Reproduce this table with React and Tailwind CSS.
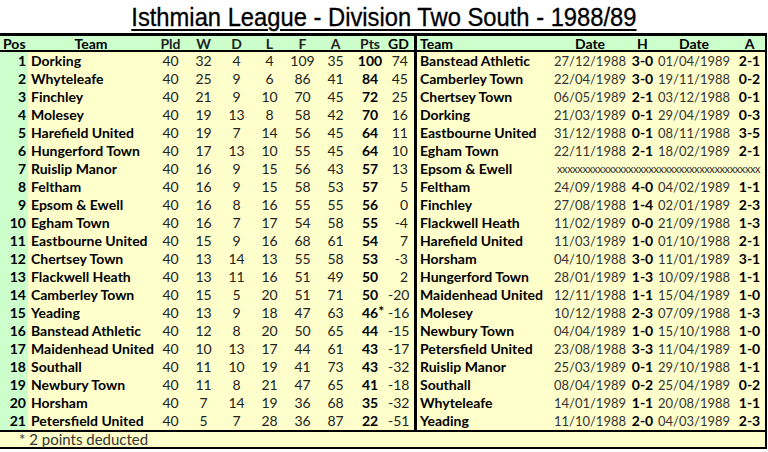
const table = [
  [1, "Dorking", 40, 32, 4, 4, 109, 35, "100", 74],
  [2, "Whyteleafe", 40, 25, 9, 6, 86, 41, "84", 45],
  [3, "Finchley", 40, 21, 9, 10, 70, 45, "72", 25],
  [4, "Molesey", 40, 19, 13, 8, 58, 42, "70", 16],
  [5, "Harefield United", 40, 19, 7, 14, 56, 45, "64", 11],
  [6, "Hungerford Town", 40, 17, 13, 10, 55, 45, "64", 10],
  [7, "Ruislip Manor", 40, 16, 9, 15, 56, 43, "57", 13],
  [8, "Feltham", 40, 16, 9, 15, 58, 53, "57", 5],
  [9, "Epsom & Ewell", 40, 16, 8, 16, 55, 55, "56", 0],
  [10, "Egham Town", 40, 16, 7, 17, 54, 58, "55", -4],
  [11, "Eastbourne United", 40, 15, 9, 16, 68, 61, "54", 7],
  [12, "Chertsey Town", 40, 13, 14, 13, 55, 58, "53", -3],
  [13, "Flackwell Heath", 40, 13, 11, 16, 51, 49, "50", 2],
  [14, "Camberley Town", 40, 15, 5, 20, 51, 71, "50", -20],
  [15, "Yeading", 40, 13, 9, 18, 47, 63, "46*", -16],
  [16, "Banstead Athletic", 40, 12, 8, 20, 50, 65, "44", -15],
  [17, "Maidenhead United", 40, 10, 13, 17, 44, 61, "43", -17],
  [18, "Southall", 40, 11, 10, 19, 41, 73, "43", -32],
  [19, "Newbury Town", 40, 11, 8, 21, 47, 65, "41", -18],
  [20, "Horsham", 40, 7, 14, 19, 36, 68, "35", -32],
  [21, "Petersfield United", 40, 5, 7, 28, 36, 87, "22", -51],
];

const results = [
  ["Banstead Athletic", "27/12/1988", "3-0", "01/04/1989", "2-1"],
  ["Camberley Town", "22/04/1989", "3-0", "19/11/1988", "0-2"],
  ["Chertsey Town", "06/05/1989", "2-1", "03/12/1988", "0-1"],
  ["Dorking", "21/03/1989", "0-1", "29/04/1989", "0-3"],
  ["Eastbourne United", "31/12/1988", "0-1", "08/11/1988", "3-5"],
  ["Egham Town", "22/11/1988", "2-1", "18/02/1989", "2-1"],
  ["Epsom & Ewell"],
  ["Feltham", "24/09/1988", "4-0", "04/02/1989", "1-1"],
  ["Finchley", "27/08/1988", "1-4", "02/01/1989", "2-3"],
  ["Flackwell Heath", "11/02/1989", "0-0", "21/09/1988", "1-3"],
  ["Harefield United", "11/03/1989", "1-0", "01/10/1988", "2-1"],
  ["Horsham", "04/10/1988", "3-0", "11/01/1989", "3-1"],
  ["Hungerford Town", "28/01/1989", "1-3", "10/09/1988", "1-1"],
  ["Maidenhead United", "12/11/1988", "1-1", "15/04/1989", "1-0"],
  ["Molesey", "10/12/1988", "2-3", "07/09/1988", "1-3"],
  ["Newbury Town", "04/04/1989", "1-0", "15/10/1988", "1-0"],
  ["Petersfield United", "23/08/1988", "3-3", "11/04/1989", "1-0"],
  ["Ruislip Manor", "25/03/1989", "0-1", "29/10/1988", "1-1"],
  ["Southall", "08/04/1989", "0-2", "25/04/1989", "0-2"],
  ["Whyteleafe", "14/01/1989", "1-1", "20/08/1988", "1-1"],
  ["Yeading", "11/10/1988", "2-0", "04/03/1989", "2-3"],
];

const font = { fontFamily: "Lato, 'Open Sans', sans-serif" };

const Num = ({ children, w = "w-[33px]" }) => (
  <div className={`${w} shrink-0 text-center text-[#222]`}>{children}</div>
);

export default function App() {
  return (
    <div className="w-[768px] h-[452px] bg-white overflow-hidden" style={font}>
      {/* Title */}
      <div className="h-[33px] flex justify-center items-start">
        <h1
          className="text-[25px] leading-[30px] mt-[2px] text-black underline underline-offset-[3px] decoration-2 whitespace-nowrap scale-x-[0.95] [-webkit-text-stroke:0.3px_black]"
          style={{ fontFamily: "'Liberation Sans', Arial, sans-serif" }}
        >
          Isthmian League - Division Two South - 1988/89
        </h1>
      </div>

      <div className="w-[767px] border-t-[3px] border-r-2 border-b-2 border-black text-[14px]">
        {/* Header */}
        <div className="flex h-[16px] leading-[16px] bg-[#ccffcc] font-bold text-black border-b-2 border-black">
          <div className="w-[414px] shrink-0 flex">
            <div className="w-[28px] shrink-0 pl-[3px]">Pos</div>
            <div className="w-[126px] shrink-0 text-center">Team</div>
            <Num>Pld</Num>
            <Num>W</Num>
            <Num>D</Num>
            <Num>L</Num>
            <Num>F</Num>
            <Num>A</Num>
            <Num w="w-[36px]">Pts</Num>
            <div className="w-[26px] shrink-0 text-right pr-[6px]">GD</div>
          </div>
          <div className="flex-1 flex border-l-[3px] border-black">
            <div className="w-[136px] shrink-0 pl-[3px]">Team</div>
            <div className="w-[74px] shrink-0 text-center">Date</div>
            <div className="w-[31px] shrink-0 text-center">H</div>
            <div className="w-[72px] shrink-0 text-center">Date</div>
            <div className="w-[35px] shrink-0 text-center pl-[4px]">A</div>
          </div>
        </div>

        {/* Rows */}
        {table.map((r, i) => {
          const res = results[i];
          return (
            <div key={r[0]} className="flex h-[18px] leading-[18px] bg-[#ffffcc]">
              <div className="w-[414px] shrink-0 flex">
                <div className="w-[28px] shrink-0 bg-[#ccffcc] text-right pr-[2px] font-bold text-black">
                  {r[0]}
                </div>
                <div className="w-[126px] shrink-0 pl-[3px] font-bold text-black overflow-hidden whitespace-nowrap">
                  {r[1]}
                </div>
                <Num>{r[2]}</Num>
                <Num>{r[3]}</Num>
                <Num>{r[4]}</Num>
                <Num>{r[5]}</Num>
                <Num>{r[6]}</Num>
                <Num>{r[7]}</Num>
                <div className="w-[36px] shrink-0 text-center font-bold text-black">
                  {r[8].endsWith("*") ? (
                    <span className="relative">
                      {r[8].slice(0, -1)}
                      <span className="absolute left-full top-[-2px] font-bold">*</span>
                    </span>
                  ) : (
                    r[8]
                  )}
                </div>
                <div className="w-[26px] shrink-0 text-right pr-[6px] text-[#222]">{r[9]}</div>
              </div>
              <div className="flex-1 flex border-l-[3px] border-black">
                <div className="w-[136px] shrink-0 pl-[3px] font-bold text-black whitespace-nowrap overflow-hidden">
                  {res[0]}
                </div>
                {res.length > 1 ? (
                  <>
                    <div className="w-[74px] shrink-0 text-center text-[#333] text-[13px]">{res[1]}</div>
                    <div className="w-[31px] shrink-0 text-center font-bold text-black">{res[2]}</div>
                    <div className="w-[72px] shrink-0 text-center text-[#333] text-[13px]">{res[3]}</div>
                    <div className="w-[35px] shrink-0 text-center font-bold text-black pl-[4px]">{res[4]}</div>
                  </>
                ) : (
                  <div className="flex-1 pl-[4px] overflow-hidden whitespace-nowrap text-[#333] text-[11px] tracking-[-0.4px]">
                    {"x".repeat(40)}
                  </div>
                )}
              </div>
            </div>
          );
        })}

        {/* Footnote */}
        <div className="h-[17px] leading-[15px] bg-[#ffffcc] border-t-2 border-black text-[#333] text-[15px] pl-[19px]">
          * 2 points deducted
        </div>
      </div>
    </div>
  );
}
